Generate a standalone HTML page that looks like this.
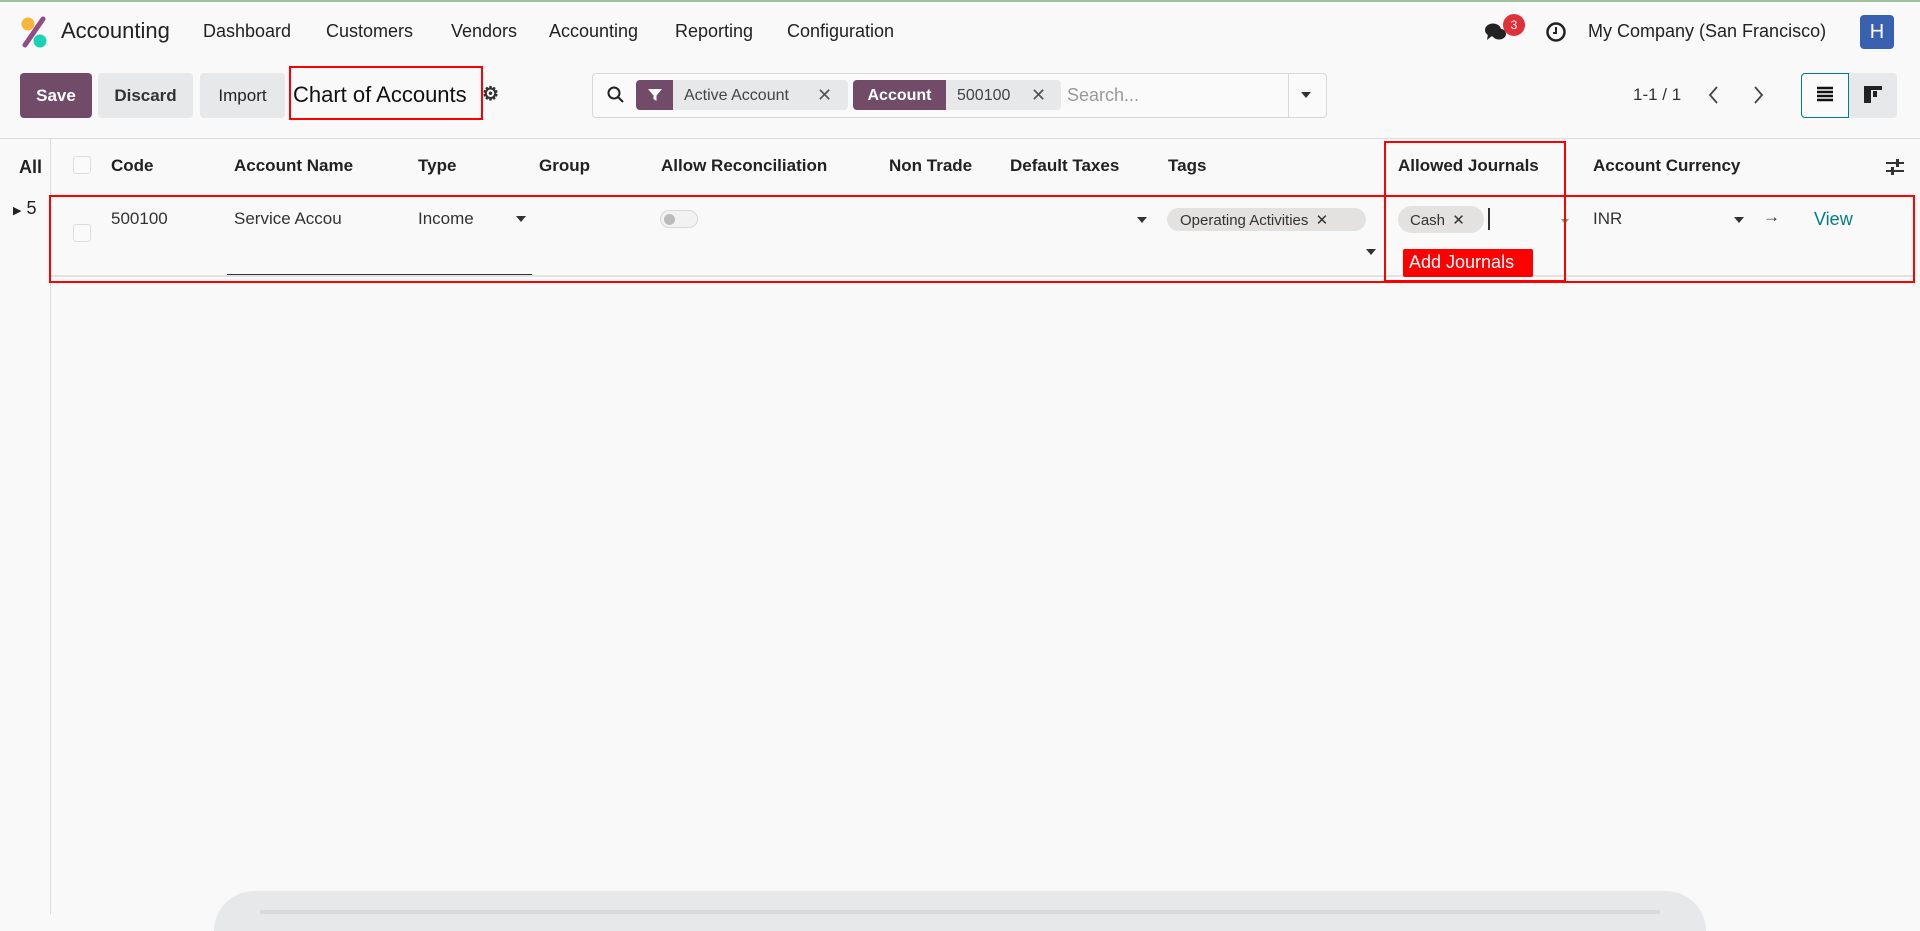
<!DOCTYPE html>
<html><head><meta charset="utf-8"><style>
*{box-sizing:border-box;margin:0;padding:0}
body{width:1920px;height:914px;background:#f9f9f9;font-family:"Liberation Sans",sans-serif;color:#1f2937;position:relative;overflow:hidden;font-size:17px}
.a{position:absolute;white-space:nowrap}
.nav{font-size:18px;top:21px;color:#222}
.btn{position:absolute;top:73px;height:45px;border-radius:4px;background:#e7e8ea;font-size:17px;font-weight:bold;color:#333;display:flex;align-items:center;justify-content:center}
.th{top:156px;font-weight:bold;font-size:17px;color:#222}
.rb{position:absolute;border:2px solid #f00}
.tri{width:0;height:0;border-left:5px solid transparent;border-right:5px solid transparent;border-top:6px solid #333;position:absolute}
</style></head><body>
<div class="a" style="left:0;top:0;width:1920px;height:2px;background:#9fbf9f"></div>
<svg class="a" style="left:20px;top:16px" width="28" height="32" viewBox="0 0 28 32"><circle cx="8" cy="8" r="6.5" fill="#f6b63c"/><circle cx="20" cy="25" r="6.5" fill="#1ad3b5"/><line x1="23" y1="3" x2="5" y2="29" stroke="#8f4c87" stroke-width="5" stroke-linecap="round"/></svg>
<div class="a" style="left:61px;top:18px;font-size:22px;color:#222">Accounting</div>
<div class="a nav" style="left:203px">Dashboard</div>
<div class="a nav" style="left:326px">Customers</div>
<div class="a nav" style="left:451px">Vendors</div>
<div class="a nav" style="left:549px">Accounting</div>
<div class="a nav" style="left:675px">Reporting</div>
<div class="a nav" style="left:787px">Configuration</div>
<svg class="a" style="left:1484px;top:20px" width="24" height="24" viewBox="0 0 24 24"><ellipse cx="9" cy="10" rx="8" ry="6.5" fill="#222"/><ellipse cx="15" cy="14" rx="7" ry="5.5" fill="#222"/><path d="M4 14 L3 20 L9 15Z" fill="#222"/></svg>
<div class="a" style="left:1503px;top:14px;width:22px;height:22px;border-radius:11px;background:#e0303a;color:#fff;font-size:12px;text-align:center;line-height:22px">3</div>
<svg class="a" style="left:1545px;top:21px" width="22" height="22" viewBox="0 0 22 22"><circle cx="11" cy="11" r="8.5" fill="none" stroke="#222" stroke-width="2.5"/><path d="M11 6v6h-3" stroke="#222" stroke-width="2" fill="none"/></svg>
<div class="a nav" style="left:1588px">My Company (San Francisco)</div>
<div class="a" style="left:1860px;top:15px;width:34px;height:34px;background:#3a61b0;border-radius:4px;color:#fff;font-size:20px;text-align:center;line-height:34px">H</div>

<div class="btn" style="left:20px;width:72px;background:#714b67;color:#fff">Save</div>
<div class="btn" style="left:98px;width:95px">Discard</div>
<div class="btn" style="left:200px;width:85px;font-weight:normal;color:#222">Import</div>
<div class="a" style="left:293px;top:82px;font-size:22px;color:#111">Chart of Accounts</div>
<div class="a" style="left:482px;top:83px;font-size:19px;color:#333;font-weight:bold">⚙</div>
<div class="rb" style="left:289px;top:66px;width:194px;height:54px"></div>

<div class="a" style="left:592px;top:73px;width:735px;height:45px;border:1px solid #d6d8db;border-radius:4px;background:#fafafa"></div>
<div class="a" style="left:1288px;top:74px;width:1px;height:43px;background:#d6d8db"></div>
<div class="tri" style="left:1301px;top:92px"></div>
<svg class="a" style="left:607px;top:86px" width="18" height="18" viewBox="0 0 18 18"><circle cx="7" cy="7" r="5.5" fill="none" stroke="#222" stroke-width="2"/><line x1="11" y1="11" x2="16" y2="16" stroke="#222" stroke-width="2"/></svg>
<div class="a" style="left:636px;top:80px;width:212px;height:30px;background:#e7e8ea;border-radius:4px;overflow:hidden"><div style="position:absolute;left:0;top:0;width:37px;height:30px;background:#714b67"></div>
<svg style="position:absolute;left:12px;top:8px" width="14" height="14" viewBox="0 0 14 14"><path d="M0 1h14L8.5 7.5V13L5.5 11V7.5Z" fill="#fff"/></svg>
<span style="position:absolute;left:48px;top:7px;font-size:16px;color:#444">Active Account</span><span style="position:absolute;left:181px;top:5px;font-size:18px;color:#555">✕</span></div>
<div class="a" style="left:853px;top:80px;width:208px;height:30px;background:#e7e8ea;border-radius:4px;overflow:hidden"><div style="position:absolute;left:0;top:0;width:93px;height:30px;background:#714b67;color:#fff;font-size:16px;font-weight:bold;text-align:center;line-height:31px">Account</div>
<span style="position:absolute;left:104px;top:7px;font-size:16px;color:#444">500100</span><span style="position:absolute;left:178px;top:5px;font-size:18px;color:#555">✕</span></div>
<div class="a" style="left:1067px;top:85px;font-size:18px;color:#999">Search...</div>

<div class="a" style="left:1633px;top:85px;font-size:17px;color:#333">1-1 / 1</div>
<svg class="a" style="left:1706px;top:84px" width="16" height="22" viewBox="0 0 16 22"><path d="M11 3L4 11l7 8" fill="none" stroke="#444" stroke-width="1.8"/></svg>
<svg class="a" style="left:1750px;top:84px" width="16" height="22" viewBox="0 0 16 22"><path d="M5 3l7 8-7 8" fill="none" stroke="#444" stroke-width="1.8"/></svg>
<div class="a" style="left:1801px;top:73px;width:48px;height:45px;border:1.5px solid #017e84;border-radius:4px 0 0 4px;background:#fafafa"></div>
<svg class="a" style="left:1816px;top:86px" width="18" height="18" viewBox="0 0 18 18"><path d="M1 2h16M1 6h16M1 10h16M1 14h16" stroke="#111" stroke-width="2.4"/></svg>
<div class="a" style="left:1849px;top:73px;width:48px;height:45px;background:#e7e8ea;border-radius:0 4px 4px 0"></div>
<svg class="a" style="left:1863px;top:85px" width="20" height="20" viewBox="0 0 20 20"><path d="M1 1h18v4H8v13H1Z" fill="#222"/><rect x="10" y="6" width="4" height="6" fill="#222"/></svg>

<div class="a" style="left:0;top:138px;width:1920px;height:1px;background:#dcdcdc"></div>
<div class="a" style="left:50px;top:139px;width:1px;height:775px;background:#dcdcdc"></div>
<div class="a" style="left:19px;top:157px;font-size:18px;font-weight:bold;color:#222">All</div>
<div class="a" style="left:13px;top:198px;font-size:18px;color:#222"><span style="font-size:11px">▶</span> 5</div>

<div class="a" style="left:73px;top:156px;width:18px;height:18px;border:1px solid #ddd;border-radius:3px;background:#fafafa"></div>
<div class="a th" style="left:111px">Code</div>
<div class="a th" style="left:234px">Account Name</div>
<div class="a th" style="left:418px">Type</div>
<div class="a th" style="left:539px">Group</div>
<div class="a th" style="left:661px">Allow Reconciliation</div>
<div class="a th" style="left:889px">Non Trade</div>
<div class="a th" style="left:1010px">Default Taxes</div>
<div class="a th" style="left:1168px">Tags</div>
<div class="a th" style="left:1398px">Allowed Journals</div>
<div class="a th" style="left:1593px">Account Currency</div>
<svg class="a" style="left:1885px;top:156px" width="20" height="22" viewBox="0 0 20 22"><path d="M1 7h18M1 15h18" stroke="#333" stroke-width="2"/><rect x="11" y="3" width="3" height="8" fill="#333"/><rect x="6" y="11" width="3" height="8" fill="#333"/></svg>

<div class="a" style="left:73px;top:224px;width:18px;height:18px;border:1px solid #ddd;border-radius:3px;background:#fafafa"></div>
<div class="a" style="left:111px;top:209px;color:#333">500100</div>
<div class="a" style="left:234px;top:209px;color:#333">Service Accou</div>
<div class="a" style="left:227px;top:274px;width:305px;height:2px;background:#2a3441"></div>
<div class="a" style="left:418px;top:209px;color:#333">Income</div>
<div class="tri" style="left:516px;top:216px"></div>
<div class="a" style="left:660px;top:210px;width:38px;height:18px;border:1px solid #d6d8db;border-radius:9px;background:#f2f2f2"><div style="position:absolute;left:3px;top:3px;width:11px;height:11px;border-radius:6px;background:#bbb"></div></div>
<div class="tri" style="left:1137px;top:217px"></div>
<div class="a" style="left:1167px;top:208px;width:199px;height:23px;border-radius:12px;background:#e4e1e1;font-size:15px;color:#333;padding:3px 0 0 13px">Operating Activities <span style="margin-left:3px">✕</span></div>
<div class="tri" style="left:1366px;top:249px"></div>
<div class="a" style="left:1398px;top:206px;width:86px;height:27px;border-radius:14px;background:#e4e1e1;font-size:15px;color:#333;padding:5px 0 0 12px">Cash <span style="margin-left:3px">✕</span></div>
<div class="a" style="left:1488px;top:208px;width:2px;height:22px;background:#333"></div>
<div class="tri" style="left:1561px;top:219px;border-left-width:4px;border-right-width:4px;border-top-width:5px;border-top-color:#6a7"></div>
<div class="a" style="left:1593px;top:209px;color:#333">INR</div>
<div class="tri" style="left:1734px;top:217px"></div>
<div class="a" style="left:1763px;top:207px;font-size:17px;color:#333">→</div>
<div class="a" style="left:1814px;top:209px;color:#017e84;font-size:18px">View</div>
<div class="a" style="left:50px;top:275px;width:1864px;height:2px;background:#e2e2e2"></div>
<div class="a" style="left:1403px;top:249px;width:130px;height:28px;background:#f00;color:#fff;font-size:18px;border-radius:2px;padding:3px 0 0 6px">Add Journals</div>

<div class="rb" style="left:49px;top:195px;width:1866px;height:88px"></div>
<div class="rb" style="left:1384px;top:141px;width:182px;height:141px"></div>

<div class="a" style="left:214px;top:891px;width:1492px;height:40px;background:#e7e8ea;border-radius:40px 40px 0 0"></div>
<div class="a" style="left:260px;top:910px;width:1400px;height:4px;background:#d9dcdc"></div>
</body></html>
